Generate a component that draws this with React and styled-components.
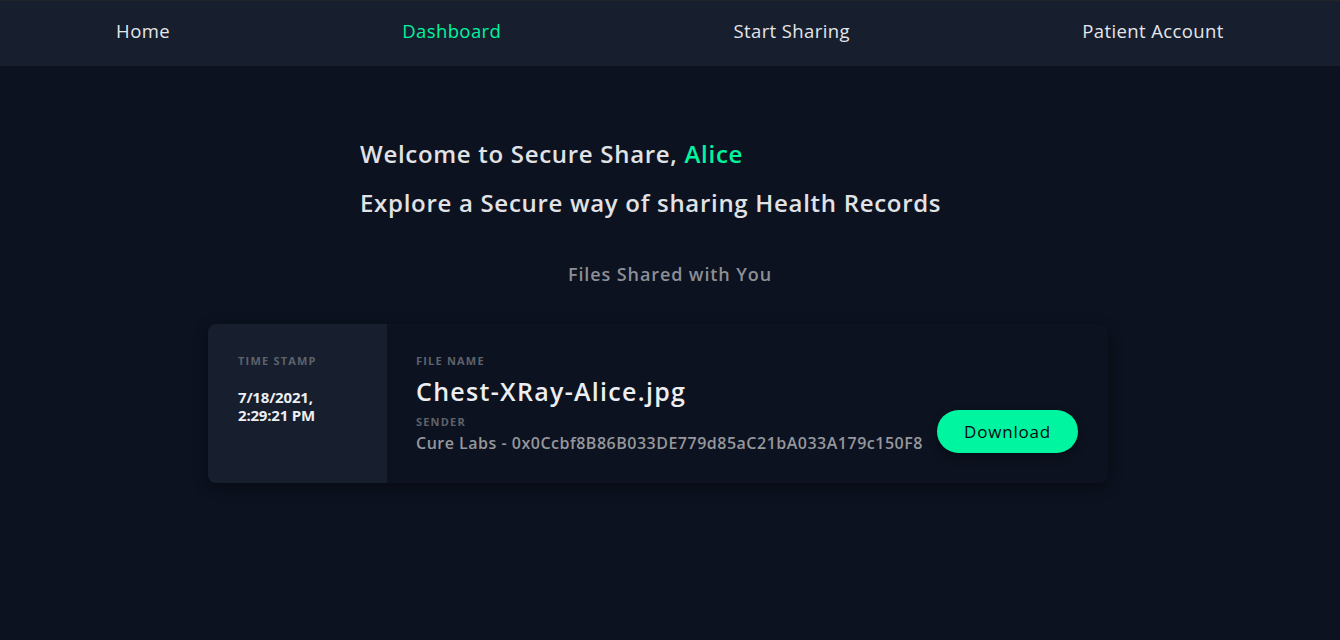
import React from "react";
import styled, { createGlobalStyle } from "styled-components";

const GlobalStyle = createGlobalStyle`
  html, body {
    margin: 0;
    padding: 0;
    background: #0c1220;
  }
  body {
    font-family: "Open Sans", "Liberation Sans", sans-serif;
  }
`;

const Page = styled.div`
  min-height: 640px;
  background: #0c1220;
`;

const NavBar = styled.nav`
  height: 66px;
  box-sizing: border-box;
  padding-bottom: 6px;
  background: #171e2e;
  border-top: 1px solid #222428;
  display: flex;
  align-items: center;
  justify-content: space-around;
`;

const NavLink = styled.a`
  font-family: "Open Sans", sans-serif;
  font-size: 18.5px;
  letter-spacing: 0.4px;
  color: ${(props) => (props.active ? "#00f5a0" : "#e4e6ea")};
  text-decoration: none;
  cursor: pointer;
`;

const Main = styled.main`
  display: flex;
  flex-direction: column;
  padding-top: 74px;
`;

const Intro = styled.div`
  margin-left: 360px;
`;

const Heading = styled.h2`
  margin: 0 0 21px;
  font-size: 24px;
  font-weight: 600;
  line-height: 28px;
  letter-spacing: 0.7px;
  color: #e1e2e5;
`;

const Highlight = styled.span`
  color: #00f5a0;
`;

const SectionTitle = styled.h3`
  margin: 24px 0 38px;
  text-align: center;
  font-size: 18px;
  font-weight: 600;
  letter-spacing: 0.9px;
  color: #8c8f96;
`;

const Card = styled.div`
  margin-left: 208px;
  width: 900px;
  height: 159px;
  display: flex;
  border-radius: 8px;
  background: #0d1220;
  box-shadow: 0 4px 14px rgba(0, 0, 0, 0.45);
`;

const StampCol = styled.div`
  width: 179px;
  flex-shrink: 0;
  box-sizing: border-box;
  padding: 29px 0 0 30px;
  background: #171e2e;
  border-radius: 8px 0 0 8px;
`;

const Label = styled.div`
  font-size: 11px;
  font-weight: 700;
  letter-spacing: 1.2px;
  text-transform: uppercase;
  color: #5d626c;
  margin-bottom: ${(props) => props.gap || 0}px;
`;

const Stamp = styled.div`
  font-size: 15px;
  font-weight: 700;
  line-height: 18px;
  letter-spacing: -0.2px;
  color: #eceef1;
`;

const InfoCol = styled.div`
  flex: 1;
  display: flex;
  align-items: center;
  padding: 0 30px 0 29px;
`;

const Info = styled.div`
  flex: 1;
`;

const FileName = styled.div`
  font-size: 25px;
  font-weight: 600;
  letter-spacing: 1.3px;
  color: #eceef1;
  line-height: 30px;
  margin: 8px 0 8px;
`;

const Sender = styled.div`
  font-size: 16px;
  font-weight: 600;
  letter-spacing: 0.5px;
  color: #95979c;
  margin-top: 3px;
`;

const DownloadButton = styled.button`
  align-self: flex-end;
  margin-bottom: 30px;
  width: 141px;
  height: 43px;
  flex-shrink: 0;
  border: none;
  border-radius: 22px;
  background: #00f5a0;
  color: #050a10;
  font-family: "Open Sans", sans-serif;
  font-size: 17px;
  font-weight: 500;
  letter-spacing: 0.8px;
  box-shadow: 0 4px 10px rgba(0, 0, 0, 0.35);
  cursor: pointer;
`;

export default function App() {
  return (
    <Page>
      <GlobalStyle />
      <NavBar>
        <NavLink>Home</NavLink>
        <NavLink active>Dashboard</NavLink>
        <NavLink>Start Sharing</NavLink>
        <NavLink>Patient Account</NavLink>
      </NavBar>
      <Main>
        <Intro>
          <Heading>
            Welcome to Secure Share, <Highlight>Alice</Highlight>
          </Heading>
          <Heading>Explore a Secure way of sharing Health Records</Heading>
        </Intro>
        <SectionTitle>Files Shared with You</SectionTitle>
        <Card>
          <StampCol>
            <Label gap={20}>Time Stamp</Label>
            <Stamp>
              7/18/2021,
              <br />
              2:29:21 PM
            </Stamp>
          </StampCol>
          <InfoCol>
            <Info>
              <Label>File Name</Label>
              <FileName>Chest-XRay-Alice.jpg</FileName>
              <Label>Sender</Label>
              <Sender>Cure Labs - 0x0Ccbf8B86B033DE779d85aC21bA033A179c150F8</Sender>
            </Info>
            <DownloadButton>Download</DownloadButton>
          </InfoCol>
        </Card>
      </Main>
    </Page>
  );
}
